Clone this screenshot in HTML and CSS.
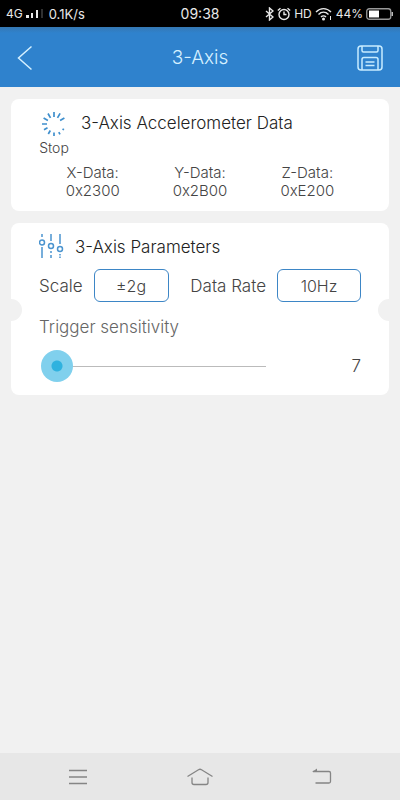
FILE: index.html
```html
<!DOCTYPE html>
<html lang="en">
<head>
<meta charset="utf-8">
<meta name="viewport" content="width=device-width, initial-scale=1">
<title>3-Axis</title>
<link rel="stylesheet" href="styles.css">
</head>
<body>
<div class="status">
  <div class="status-side">
    <span class="network">4G</span>
    <svg class="signal" width="18" height="10" viewBox="0 0 18 10" fill="#e8e8e8"><path d="M0 6h3v3H0zM5 4h2v5H5zM10 1h2v8h-2z"/><path d="M15 0h2v9h-2z" fill="#303030"/></svg>
    <span class="speed">0.1K/s</span>
  </div>
  <span class="clock">09:38</span>
  <div class="status-side status-end">
    <svg width="9" height="14" viewBox="0 0 9 14" fill="none" stroke="#e8e8e8" stroke-width="1.4"><path d="M1 4l7 6-3.500 3V1L8 4l-7 6"/></svg>
    <svg width="14" height="14" viewBox="0 0 14 14" fill="none" stroke="#e8e8e8" stroke-width="1.400"><circle cx="7" cy="7.500" r="5"/><path d="M7 4.500v3h2.500M.8 3.500l2.700-2.300M13.200 3.500l-2.700-2.300"/></svg>
    <span class="hd">HD</span>
    <svg width="18" height="14" viewBox="0 0 18 14" fill="none" stroke="#e8e8e8" stroke-width="1.400"><path d="M1 5c4.500-4.500 10.500-4.500 15 0M3.500 7.500c3-3 7-3 10 0M6 10c1.500-1.500 3.500-1.500 5 0"/><circle cx="8.500" cy="12" r=".8" fill="#e8e8e8"/><path d="M15.500 9v4" stroke-width="1"/></svg>
    <span class="charge">44%</span>
    <svg width="28" height="12" viewBox="0 0 28 12"><rect x=".75" y=".75" width="24" height="10.500" rx="2.500" fill="none" stroke="#999" stroke-width="1.300"/><path d="M3 2.500h10v7H3z" fill="#fff"/><path d="M25.500 4h1.500v4h-1.500z" fill="#bbb"/></svg>
  </div>
</div>
<header class="bar">
  <button class="icon-button" aria-label="Back"><svg width="16" height="26" viewBox="0 0 16 26" fill="none" stroke="#d5f0ff" stroke-width="1.500"><path d="M14.500 1.500L1.500 13l13 11.500"/></svg></button>
  <h1>3-Axis</h1>
  <button class="icon-button" aria-label="Save"><svg width="26" height="26" viewBox="0 0 26 26" fill="none" stroke="#c8ecff" stroke-width="1.500" stroke-linejoin="round"><rect x="1" y="1" width="24" height="24" rx="3"/><path d="M5 1v4.500q0 1.500 1.500 1.500h13q1.500 0 1.500-1.500V1M5 25V14.500q0-2 2-2h12q2 0 2 2V25M8.500 17h9M8.500 20.500h9"/></svg></button>
</header>
<main>
  <section class="card">
    <div class="data-head">
      <button class="stop">
        <svg width="30" height="28" viewBox="-15 -14 30 28" stroke="#3f8fcd" stroke-width="1.700" fill="none"><path d="M0-7v-5M3.500-6.100l2.600-4.500M6.100-3.500l4.300-2.500M-3.500-6.100l-2.500-4.400M-6.100-3.500l-4.300-2.500M-7 0h-5M-6.500 3.700l-3.500 2M-3.700 6.500l-2 3.500M0 8.500v3.500M4.800 8.200l1.200 2.200M8.500 4.900l1.500.9"/></svg>
        <span>Stop</span>
      </button>
      <h2>3-Axis Accelerometer Data</h2>
    </div>
    <dl class="readings">
      <div><dt>X-Data:</dt><dd>0x2300</dd></div>
      <div><dt>Y-Data:</dt><dd>0x2B00</dd></div>
      <div><dt>Z-Data:</dt><dd>0xE200</dd></div>
    </dl>
  </section>
  <section class="card notched">
    <div class="param-head">
      <svg width="25" height="26" viewBox="0 0 25 26" fill="none" stroke="#4b94cf" stroke-width="1.500"><path d="M3 0v3M3 13v11M12 0v7M12 17v2M12 21v3M21 0v10M21 20v1.500M21 22.500V24"/><circle cx="3" cy="8.500" r="2.500"/><circle cx="12" cy="12" r="2.500"/><circle cx="21" cy="15" r="2.500"/></svg>
      <h2>3-Axis Parameters</h2>
    </div>
    <div class="params">
      <div class="param"><span id="scale">Scale</span><button class="choice" aria-labelledby="scale scale-value"><span id="scale-value">±2g</span></button></div>
      <div class="param"><span id="rate">Data Rate</span><button class="choice wide" aria-labelledby="rate rate-value"><span id="rate-value">10Hz</span></button></div>
    </div>
    <label class="trigger" for="trigger">Trigger sensitivity</label>
    <div class="slider">
      <input id="trigger" type="range" min="7" max="127" value="7">
      <output for="trigger">7</output>
    </div>
  </section>
</main>
<nav class="system">
  <button aria-label="Recent apps"><svg width="20" height="16" viewBox="0 0 20 16" stroke="#858585" stroke-width="1.300"><path d="M1 1.500h18M1 8h18M1 14.500h18"/></svg></button>
  <button aria-label="Home"><svg width="26" height="18" viewBox="0 0 26 18" fill="none" stroke="#858585" stroke-width="1.300"><path d="M.5 8.500L11.500 1.700q1.500-.9 3 0L25.500 8.500M5 9.500v5q0 2 2 2h12q2 0 2-2v-5"/></svg></button>
  <button aria-label="Back"><svg width="20" height="18" viewBox="0 0 20 18" fill="none" stroke="#858585" stroke-width="1.300"><path d="M1 3.500h16q1.500 0 1.500 1.500v8.500q0 1.500-1.500 1.500H3.500"/><path d="M0 4l5-3.500V4z" fill="#858585" stroke="none"/></svg></button>
</nav>
</body>
</html>
```
FILE: styles.css
```css
* {
  box-sizing: border-box;
}

body {
  margin: 0;
  min-height: 100vh;
  display: flex;
  flex-direction: column;
  background: #f1f1f1;
  color: #444;
  font: 300 17px/20px Inter, Roboto, sans-serif;
}

button {
  padding: 0;
  border: 0;
  background: none;
  color: inherit;
  font: inherit;
}

svg {
  display: block;
  flex: none;
}

h1,
h2 {
  margin: 0;
  font-weight: 300;
}

.status {
  display: flex;
  align-items: center;
  height: 27px;
  padding: 0 6px;
  background: #000;
  color: #e8e8e8;
  font-size: 12px;
  font-weight: 400;
}

.status-side {
  flex: 1;
  display: flex;
  align-items: center;
  gap: 3px;
}

.status-end {
  justify-content: flex-end;
}

.signal {
  margin-right: 2px;
}

.speed {
  font-size: 13px;
}

.clock {
  font-size: 14px;
}

.bar {
  display: flex;
  align-items: center;
  justify-content: space-between;
  height: 60px;
  padding: 2px 17px 0;
  background: linear-gradient(#3578b3, #2f82cd 6px);
  color: #d5f0ff;
}

.bar h1 {
  font-size: 19px;
  line-height: 24px;
}

.icon-button {
  width: 26px;
}

main {
  flex: 1;
  display: flex;
  flex-direction: column;
  gap: 12px;
  padding: 12px 11px;
}

.card {
  padding: 11px 28px;
  border-radius: 8px;
  background: #fff;
}

.card h2 {
  color: #222;
  font-size: 17px;
  line-height: 26px;
}

.data-head {
  display: flex;
  gap: 12px;
}

.stop {
  font-size: 14px;
}

.readings {
  display: grid;
  grid-template-columns: repeat(3, 1fr);
  margin: 6px 0 0;
  font-size: 15px;
  line-height: 18px;
  text-align: center;
}

.readings dd {
  margin: 0;
}

.notched {
  position: relative;
  padding-bottom: 13px;
}

.notched::before,
.notched::after {
  content: "";
  position: absolute;
  top: 44%;
  width: 22px;
  height: 22px;
  border-radius: 50%;
  background: #f1f1f1;
}

.notched::before {
  left: -11px;
}

.notched::after {
  right: -11px;
}

.param-head {
  display: flex;
  align-items: center;
  gap: 11px;
}

.params {
  display: flex;
  justify-content: space-between;
  margin-top: 9px;
}

.param {
  display: flex;
  align-items: center;
  gap: 11px;
}

.choice {
  width: 75px;
  height: 33px;
  border: 1px solid #3d86c6;
  border-radius: 6px;
  font-size: 16px;
}

.wide {
  width: 84px;
}

.trigger {
  display: block;
  margin-top: 15px;
  color: #666;
}

.slider {
  display: flex;
  align-items: center;
  justify-content: space-between;
  margin-top: 13px;
}

.slider input {
  appearance: none;
  width: 70%;
  height: 32px;
  margin: 0 0 0 2px;
  background: linear-gradient(#bbb, #bbb) right / calc(100% - 16px) 1px no-repeat;
}

.slider input::-webkit-slider-thumb {
  appearance: none;
  width: 32px;
  height: 32px;
  border-radius: 50%;
  background: radial-gradient(circle, #2fb2df 5px, #80d0ed 6px);
}

.system {
  display: flex;
  align-items: center;
  justify-content: space-between;
  height: 47px;
  padding: 0 68px;
  background: #e7e7e7;
}
```
